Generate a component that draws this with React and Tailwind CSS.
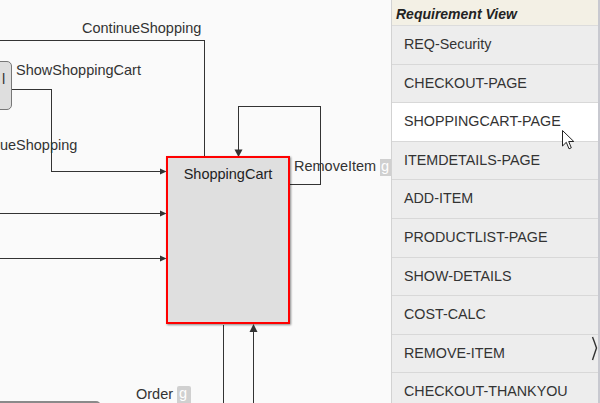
export default function App() {
  const rows = [
    "REQ-Security",
    "CHECKOUT-PAGE",
    "SHOPPINGCART-PAGE",
    "ITEMDETAILS-PAGE",
    "ADD-ITEM",
    "PRODUCTLIST-PAGE",
    "SHOW-DETAILS",
    "COST-CALC",
    "REMOVE-ITEM",
    "CHECKOUT-THANKYOU",
  ];
  const lbl = "absolute whitespace-nowrap text-[14.5px] leading-[17px] text-[#333]";
  return (
    <div className="relative flex w-[600px] h-[403px] overflow-hidden font-['Liberation_Sans',Arial,sans-serif]">
      {/* Diagram canvas */}
      <div className="relative w-[391px] h-full shrink-0 overflow-hidden bg-[#fafafa]">
        <svg className="absolute inset-0" width="391" height="403" shapeRendering="crispEdges">
          <g stroke="#333" strokeWidth="1" fill="none">
            <path d="M0 40.5 H204.5 V157" />
            <path d="M12 89.5 H51.5 V171.5 H161" />
            <path d="M0 213.5 H161" />
            <path d="M0 258.5 H161" />
            <path d="M290 184.5 H320.5 V106.5 H238.5 V150" />
            <path d="M223.5 325 V403" />
            <path d="M253.5 331 V403" />
          </g>
          <g fill="#333" shapeRendering="auto">
            <path d="M160 168.5 L166.5 171.5 L160 174.5 Z" />
            <path d="M160 210.5 L166.5 213.5 L160 216.5 Z" />
            <path d="M160 255.5 L166.5 258.5 L160 261.5 Z" />
            <path d="M234.5 149.5 L242.5 149.5 L238.5 157 Z" />
            <path d="M249.5 332 L257.5 332 L253.5 324 Z" />
          </g>
        </svg>

        {/* partial node on the left */}
        <div className="absolute left-[-50px] top-[61px] w-[62px] h-[49px] rounded-[5px] border border-[#777] bg-[#dedede]">
          <span className="absolute left-[51px] top-[9px] text-[14.5px] leading-[17px] text-[#333]">l</span>
        </div>

        {/* bottom-left node top edge */}
        <div className="absolute left-[-20px] top-[401px] w-[121px] h-[20px] rounded-[5px] border-2 border-[#8a8a8a] bg-[#e2e2e2]" />

        {/* ShoppingCart node */}
        <div className="absolute left-[166px] top-[156px] w-[124px] h-[168px] border-2 border-[#f00] bg-[#dfdfdf] shadow-[1px_1px_2px_rgba(0,0,0,0.45)] flex justify-center">
          <span className="mt-[8px] text-[14.5px] leading-[17px] text-[#222]">ShoppingCart</span>
        </div>

        <span className={`${lbl} left-[82px] top-[20px]`}>ContinueShopping</span>
        <span className={`${lbl} left-[16px] top-[62px]`}>ShowShoppingCart</span>
        <span className={`${lbl} left-[-42px] top-[137px]`}>ContinueShopping</span>
        <span className={`${lbl} left-[294px] top-[158px]`}>RemoveItem</span>
        <span className="absolute left-[380px] top-[159px] w-[11px] h-[17px] bg-[#d0d0d0] text-white text-[14.5px] leading-[15px] pl-[1px]">g</span>
        <span className={`${lbl} left-[136px] top-[386px]`}>Order</span>
        <span className="absolute left-[177px] top-[386px] w-[14px] h-[20px] rounded-[2px] bg-[#d0d0d0] text-white text-[14.5px] leading-[15px] pl-[2px]">g</span>
      </div>

      {/* Requirement panel */}
      <div className="relative w-[209px] h-full flex flex-col border-l border-[#d2d2d2] border-r-2 border-r-[#c8c9d0] bg-[#ededed]">
        <div className="h-[26px] shrink-0 flex items-center pt-[3px] pl-[4px] bg-[#f3f0e5] border-b border-[#dcdcdc] text-[14px] font-bold italic text-[#222]">
          Requirement View
        </div>
        {rows.map((r) => (
          <div
            key={r}
            className={`h-[38.6px] shrink-0 flex items-center pl-[12px] border-b border-[#d8d8d8] text-[14.3px] text-[#333] ${
              r === "SHOPPINGCART-PAGE" ? "bg-white" : "bg-[#ededed]"
            }`}
          >
            {r}
          </div>
        ))}
        <svg className="absolute left-[199px] top-[336px]" width="8" height="25" viewBox="0 0 8 25">
          <path d="M1.5 1 Q3.5 6 5.5 12 Q3.5 18 1.5 24" stroke="#333" strokeWidth="1.4" fill="none" />
        </svg>
      </div>

      {/* mouse cursor */}
      <svg className="absolute left-[562px] top-[130px]" width="14" height="21" viewBox="0 0 14 21">
        <path d="M0.5 0.5 L0.5 16 L4.3 12.3 L7 18.8 L9.3 17.8 L6.7 11.5 L11.8 11.5 Z" fill="#fff" stroke="#222" strokeWidth="1" strokeLinejoin="round" />
      </svg>
    </div>
  );
}
